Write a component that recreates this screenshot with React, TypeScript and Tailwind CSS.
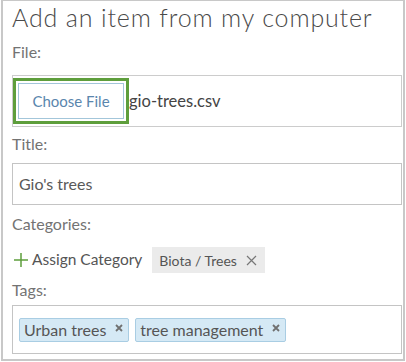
import React from 'react';

const font = { fontFamily: 'Lato, "Open Sans", sans-serif' };

const Label: React.FC<{ children: React.ReactNode; className?: string }> = ({ children, className }) => (
  <div className={`h-[20px] text-[16px] leading-[20px] text-[#737373] ${className ?? ''}`}>{children}</div>
);

const App: React.FC = () => {
  return (
    <div className="w-[406px] h-[362px] bg-white overflow-hidden" style={font}>
      <div className="ml-[1px] w-[404px] h-[361px] border-2 border-t border-[#c8c8c8] overflow-hidden pl-[9px]">
        <h1 className="mt-[1px] h-[30px] text-[25px] leading-[30px] font-light text-[#4a4a4a] tracking-[0.85px] whitespace-nowrap">
          Add an item from my computer
        </h1>
        <Label className="mt-[10px]">File:</Label>

        <div className="mt-[13px] w-[390px] h-[52px] border border-[#cccccc] flex items-center">
          <div className="border-[3px] border-[#5e9e3c] p-[2px]">
            <div className="w-[106px] h-[36px] border border-[#a3c6da] bg-white flex items-center justify-center text-[15px] text-[#5a86ad]">
              Choose File
            </div>
          </div>
          <span className="text-[16.5px] text-[#444444]">gio-trees.csv</span>
        </div>

        <Label className="mt-[7px]">Title:</Label>
        <div className="mt-[9px] w-[390px] h-[42px] border border-[#c4c4c4] flex items-center pl-[6px] text-[16px] text-[#595959]">
          Gio's trees
        </div>

        <Label className="mt-[9px]">Categories:</Label>
        <div className="mt-[13px] h-[26px] flex items-center">
          <svg width="14" height="14" viewBox="0 0 14 14" className="ml-[2px]">
            <path d="M7 0v14M0 7h14" stroke="#5e9e3c" strokeWidth="1.5" />
          </svg>
          <span className="ml-[4px] text-[15.5px] text-[#555555]">Assign Category</span>
          <span className="ml-[10px] h-[26px] pl-[7px] pr-[8px] bg-[#ebebeb] flex items-center text-[14px] text-[#555555]">
            Biota / Trees
            <svg width="11" height="11" viewBox="0 0 11 11" className="ml-[9px]">
              <path d="M1 1l9 9M10 1l-9 9" stroke="#777777" strokeWidth="1.2" />
            </svg>
          </span>
        </div>

        <Label className="mt-[7px]">Tags:</Label>
        <div className="mt-[5px] w-[390px] h-[49px] border border-[#c4c4c4] flex items-center pl-[6px] gap-[6px]">
          {['Urban trees', 'tree management'].map((t) => (
            <span
              key={t}
              className="h-[24px] pl-[4px] pr-[5px] bg-[#d5e9f5] border border-[#a9cde3] rounded-[2px] flex items-center text-[16px] leading-[20px] text-[#555555]"
            >
              {t}
              <svg width="8" height="8" viewBox="0 0 8 8" className="ml-[9px] mb-[4px]">
                <path d="M1 1l6 6M7 1l-6 6" stroke="#707070" strokeWidth="1.8" />
              </svg>
            </span>
          ))}
        </div>
      </div>
    </div>
  );
};

export default App;
